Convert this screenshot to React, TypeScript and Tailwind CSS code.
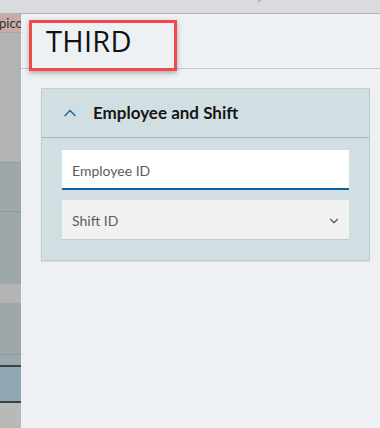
import { ChevronUp, ChevronDown } from 'lucide-react';

const font = { fontFamily: '"Source Sans Pro", Lato, "Open Sans", sans-serif' };

function SideStrip() {
  return (
    <div className="w-[21px] shrink-0 flex flex-col overflow-hidden">
      <div className="h-[19px] shrink-0 bg-[#c6aba6] border-b border-[#b9a29d] flex items-center overflow-hidden">
        <span className="-ml-[1px] text-[13px] text-[#333] whitespace-nowrap leading-none" style={{ fontFamily: 'Lato, sans-serif' }}>
          picon
        </span>
      </div>
      <div className="h-[129px] shrink-0 bg-[#b1b3b5]" />
      <div className="h-[50px] shrink-0 bg-[#9ea7a9] border-t border-[#959c9e] border-b border-b-[#7e9ea3]" />
      <div className="h-[72px] shrink-0 bg-[#9ea7a9] border-b border-[#a2a6a8]" />
      <div className="h-[20px] shrink-0 bg-[#b2b4b5] border-b border-[#a2a6a8]" />
      <div className="h-[51px] shrink-0 bg-[#9ea7a9] border-b border-[#7e9ea3]" />
      <div className="h-[12px] shrink-0 bg-[#9ea7a9] border-b-2 border-[#3d4247]" />
      <div className="h-[36px] shrink-0 bg-[#8fa7b3] border-b-2 border-[#3d4247]" />
      <div className="flex-1 bg-[#b9b9b9]" />
    </div>
  );
}

export default function App() {
  return (
    <div className="w-[380px] h-[428px] flex flex-col bg-[#eef1f4] overflow-hidden" style={font}>
      <div className="h-[14px] shrink-0 bg-[#dadbdf] border-b border-[#b0b2b6] flex">
        <div className="ml-[258px] w-[3px] h-[2px] bg-[#b8b9bc]" />
      </div>
      <div className="flex flex-1 min-h-0">
        <SideStrip />
        <div className="flex-1 flex flex-col">
          <div className="h-[55px] shrink-0 border-b border-[#c6c9cd] relative">
            <div className="absolute left-[8px] top-[6px] w-[148px] h-[51px] border-[3px] border-[#f24a4a] shadow-[0_2px_5px_rgba(0,0,0,0.3)] pointer-events-none" />
            <h1
              className="pl-[25px] pt-[10px] text-[29px] leading-[34px] font-normal text-[#111] tracking-[0.3px]"
              style={{ fontFamily: '"Open Sans", sans-serif' }}
            >
              THIRD
            </h1>
          </div>
          <div className="pl-[20px] pr-[10px] pt-[19px]">
            <div className="bg-[#d1dfe3] border border-[#c2cdd1] shadow-[0_1px_1px_rgba(0,0,0,0.08)]">
              <div className="h-[49px] flex items-center border-b border-[#8fc2cf]">
                <ChevronUp className="ml-[18px] w-[20px] h-[20px] text-[#1d6fa3]" strokeWidth={2} />
                <span className="ml-[13px] text-[17px] font-bold text-[#161616]" style={{ fontFamily: 'Lato, sans-serif' }}>
                  Employee and Shift
                </span>
              </div>
              <div className="px-[20px] pt-[12px] pb-[20px] flex flex-col gap-[10px]">
                <div className="h-[40px] bg-white border-b-2 border-[#0f62a0] flex items-center px-[10px] pt-[3px]">
                  <span className="text-[14px] text-[#5c5c5c]" style={{ fontFamily: 'Lato, sans-serif' }}>Employee ID</span>
                </div>
                <div className="h-[40px] bg-[#f1f1f1] border-b border-[#c8c8c8] flex items-center justify-between pl-[10px] pr-[8px] pt-[2px]">
                  <span className="text-[14px] text-[#5c5c5c]" style={{ fontFamily: 'Lato, sans-serif' }}>Shift ID</span>
                  <ChevronDown className="w-[14px] h-[14px] text-[#555]" strokeWidth={2} />
                </div>
              </div>
            </div>
          </div>
        </div>
      </div>
    </div>
  );
}
